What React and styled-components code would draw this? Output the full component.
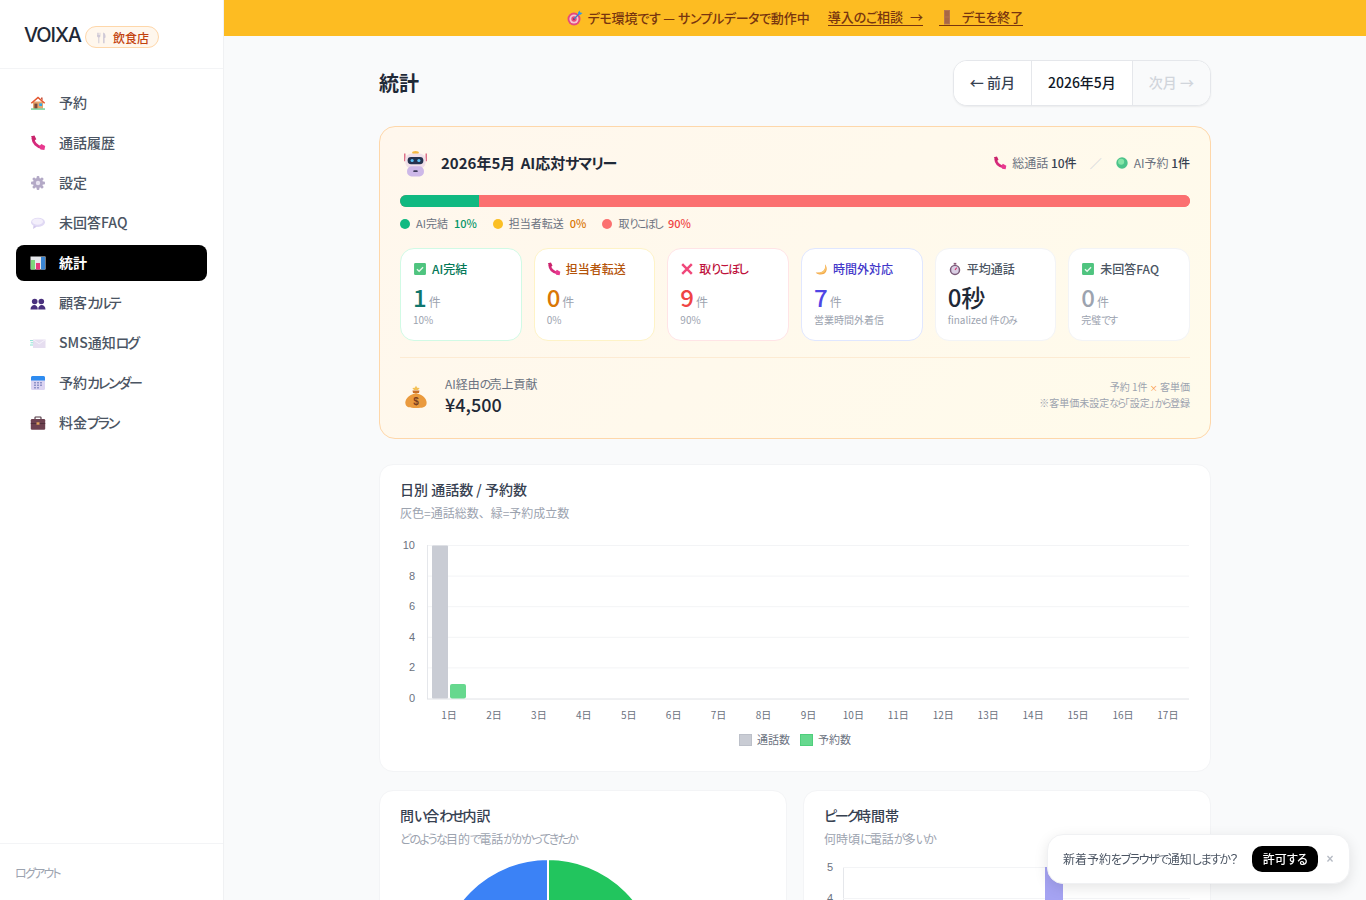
import React from "react";
import styled, { createGlobalStyle } from "styled-components";

const Global = createGlobalStyle`
  html, body { margin: 0; padding: 0; height: 100%; }
  body { font-family: "Noto Sans CJK JP", "Noto Sans", sans-serif; font-feature-settings: "palt"; color: #1f2937; background: #f9fafb; }
  * { box-sizing: border-box; }
`;

const Kana = styled.span`letter-spacing: var(--kana, -0.15em); font-feature-settings: "palt";`;
const T = ({ children }) => children.split(/([\u3040-\u30ff]+)/).map((part, i) => i % 2 ? <Kana key={i}>{part}</Kana> : part);

const Shell = styled.div`display: flex; height: 100vh; overflow: hidden;`;
const Sidebar = styled.aside`width: 224px; flex: none; background: #fff; border-right: 1px solid #f0f1f3; display: flex; flex-direction: column;`;
const Brand = styled.div`height: 69px; border-bottom: 1px solid #f3f4f6; display: flex; align-items: center; gap: 4px; padding: 0 24px;`;
const Logo = styled.span`font-family: Inter, sans-serif; font-size: 20px; font-weight: 500; letter-spacing: -1.1px; color: #1f2937; position: relative; top: 1px;`;
const IndustryBadge = styled.span`display: inline-flex; align-items: center; gap: 5px; height: 22px; width: 74px; padding: 0 9px; border-radius: 11px; border: 1px solid #fed7aa; background: #fff7ed; color: #c2410c; font-size: 12px; font-weight: 500; white-space: nowrap; margin-top: 6px;`;
const Nav = styled.nav`flex: 1; padding: 16px 16px 0; display: flex; flex-direction: column; gap: 4px;`;
const NavItem = styled.a`height: 36px; display: flex; align-items: center; gap: 13px; padding: 0 14px; border-radius: 8px; font-size: 14px; font-weight: ${p => p.$active ? 700 : 500}; color: ${p => p.$active ? "#fff" : "#4b5563"}; background: ${p => p.$active ? "#000" : "transparent"};`;
const NavLabel = styled.span`margin-top: -2px;`;
const SideFoot = styled.div`height: 57px; border-top: 1px solid #f3f4f6; display: flex; align-items: center; padding: 0 15px; font-size: 12px; color: #9ca3af;`;

const Main = styled.div`flex: 1; min-width: 0; display: flex; flex-direction: column;`;
const Banner = styled.div`--kana: -0.03em; height: 36px; flex: none; background: #fdbc22; color: #78350f; font-size: 13px; font-weight: 500; display: flex; align-items: center; justify-content: center; gap: 16px;`;
const BannerPart = styled.span`display: inline-flex; align-items: center; gap: 5px; margin-top: -1px; margin-right: 2px;`;
const BannerLink = styled.a`display: inline-flex; align-items: center; gap: 7px; border-bottom: 1px solid #78350f; line-height: 16px; margin-top: -1px; word-spacing: 4px;`;
const Content = styled.main`width: 832px; margin: 0 auto; padding-top: 24px;`;
const PageHead = styled.header`display: flex; align-items: center; justify-content: space-between; margin-bottom: 20px;`;
const Title = styled.h1`margin: 0 0 2px; font-size: 20px; font-weight: 700; color: #1f2937;`;
const MonthNav = styled.div`height: 46px; display: flex; border: 1px solid #e5e7eb; border-radius: 14px; background: #fff; overflow: hidden; box-shadow: 0 1px 2px rgba(0,0,0,.06);`;
const MonthBtn = styled.div`display: flex; align-items: center; padding: 0 16px 2px; font-size: 14px; font-weight: 500; color: ${p => p.$off ? "#d1d5db" : "#374151"}; background: ${p => p.$off ? "#f9fafb" : "#fff"}; ${p => p.$off && "border-left: 1px solid #e5e7eb;"}`;
const MonthLabel = styled.div`display: flex; align-items: center; padding: 0 16px 2px; font-size: 14px; font-weight: 500; color: #111827; border-left: 1px solid #e5e7eb;`;

const Summary = styled.section`height: 313px; background: linear-gradient(135deg, #fff7ed, #fffbeb); border: 1px solid #fed7aa; border-radius: 16px; padding: 20px; margin-bottom: 25px;`;
const SummaryHead = styled.div`height: 32px; display: flex; align-items: center; justify-content: space-between; margin-bottom: 16px;`;
const SummaryTitle = styled.h2`margin: 0; display: flex; align-items: center; gap: 12px; padding-left: 2px; font-size: 15px; font-weight: 700; color: #1f2937;`;
const TitleText = styled.span`--kana: -0.08em; margin-top: -2px; word-spacing: 2px;`;
const Totals = styled.div`display: flex; align-items: center; gap: 5px; font-size: 12px; color: #6b7280;`;
const TotalText = styled.span`margin-top: -2px;`;
const Strong = styled.b`font-weight: 500; color: #374151;`;
const Slash = styled.span`color: #d1d5db; margin: 0 8px;`;
const Progress = styled.div`height: 12px; border-radius: 6px; overflow: hidden; display: flex; background: #f87171;`;
const Segment = styled.div`background: ${p => p.$c};`;
const Legend = styled.div`display: flex; gap: 16px; margin-top: 8px; height: 16px; align-items: center; font-size: 11px; color: #6b7280;`;
const LegendItem = styled.span`display: inline-flex; align-items: center; margin-top: -1px;`;
const Dot = styled.i`width: 10px; height: 10px; border-radius: 50%; background: ${p => p.$c}; margin-right: 6px; position: relative; top: 1px;`;
const Pct = styled.b`font-size: 11px; font-weight: 500; color: ${p => p.$c}; margin-left: 6px;`;
const Tiles = styled.div`display: grid; grid-template-columns: repeat(6, 1fr); gap: 12px; margin-top: 17px;`;
const Tile = styled.div`height: 93px; background: #fff; border: 1px solid ${p => p.$b}; border-radius: 14px; padding: 11px 12px 0;`;
const TileLabel = styled.div`display: flex; align-items: center; gap: 5px; height: 18px; font-size: 12px; font-weight: 500; color: ${p => p.$c}; white-space: nowrap;`;
const LabelSpan = styled.span`margin-top: -2px;`;
const TileValue = styled.div`display: flex; align-items: baseline; gap: 2px; margin-top: 3px; height: 32px; line-height: 32px; font-size: 24px; font-weight: 500; color: ${p => p.$c};`;
const Unit = styled.span`font-size: 12px; font-weight: 400; color: #9ca3af;`;
const TileSub = styled.div`font-size: 10px; line-height: 14px; color: #9ca3af; margin-top: 0; white-space: nowrap;`;
const Revenue = styled.div`margin-top: 16px; border-top: 1px solid #fdebd3; display: flex; align-items: center; justify-content: space-between; height: 64px; padding: 14px 0 0 4px;`;
const RevLeft = styled.div`display: flex; align-items: center; gap: 17px;`;
const RevLabel = styled.div`font-size: 12px; color: #6b7280; line-height: 16px; margin-top: -1px;`;
const RevValue = styled.div`font-size: 18px; font-weight: 500; color: #1f2937; line-height: 24px;`;
const RevNote = styled.div`text-align: right; font-size: 10px; line-height: 14.500px; color: #9ca3af; margin-top: -3px;`;
const Times = styled.span`color: #fb923c; font-size: 8px;`;

const Card = styled.section`background: #fff; border: 1px solid #f3f4f6; border-radius: 14px; padding: 14px 20px 0; height: ${p => p.$h}px; overflow: hidden;`;
const CardTitle = styled.h3`margin: 0; font-size: 14px; font-weight: 500; color: #374151; line-height: 20px;`;
const CardSub = styled.p`margin: 4px 0 0; font-size: 12px; color: #9ca3af; line-height: 20px; font-feature-settings: normal;`;
const Twin = styled.div`display: grid; grid-template-columns: 1fr 1fr; gap: 16px; margin-top: 18px;`;
const ChartSvg = styled.svg`display: block; margin: ${p => p.$m}; overflow: visible;`;
const AxisText = styled.text`font-family: "Liberation Sans", Arial, sans-serif; font-size: 11px; fill: #6b7280;`;
const LabelText = styled.text`font-family: "Noto Sans CJK JP", sans-serif; font-size: ${p => p.$s || 10}px; fill: #6b7280;`;

const Toast = styled.div`--kana: -0.12em; position: fixed; right: 16px; bottom: 16px; width: 303px; height: 50px; background: #fff; border: 1px solid #f0f1f3; border-radius: 16px; box-shadow: 0 4px 14px rgba(0,0,0,.1); display: flex; align-items: center; padding: 0 15px; font-size: 12px; color: #4b5563; white-space: nowrap;`;
const ToastText = styled.span`flex: 1; margin-top: -1px;`;
const AllowBtn = styled.button`flex: none; height: 26px; width: 66px; padding: 0 0 2px; border: 0; border-radius: 10px; background: #000; color: #fff; font: 500 12px "Noto Sans CJK JP", sans-serif; font-feature-settings: "palt"; --kana: -0.05em;`;
const Close = styled.span`flex: none; width: 8px; margin-left: 8px; text-align: center; font: 700 12px "Liberation Sans", sans-serif; color: #b6bbc4;`;

const Svg = ({ s = 16, children }) => <svg width={s} height={s} viewBox="0 0 16 16" style={{ flex: "none" }}>{children}</svg>;

const icons = {
  house: <><rect x="3" y="6.5" width="10" height="7" fill="#e5a66e" /><path d="M.8 7.8 8 1.5l7.2 6.3-1 .9L8 3.6 1.8 8.7z" fill="#e4562f" /><path d="M11 2.5h1.6v3L11 4z" fill="#c9513a" /><rect x="4.4" y="8.6" width="3" height="4.9" fill="#7a4a3a" /><rect x="9.2" y="8.4" width="2.9" height="2.6" fill="#2fa8e6" /><rect x="1" y="13.5" width="14" height="1.1" fill="#46c07a" /></>,
  phone: <><path d="M2.900 3c.3 4.800 4 8.600 9.400 9.600" fill="none" stroke="#d62b7c" strokeWidth="3" /><path d="M1 1.300 4.500.6l1.800 3.700-2.900 2z" fill="#c9246b" /><path d="m9.300 11.500 2-2.600 3.900 2.200-.8 3.900-3.900-.4z" fill="#e8398f" /></>,
  gear: <><g fill="#b3a9c6"><circle cx="8" cy="8" r="5" /><rect x="6.600" y="1" width="2.800" height="14" rx="1" /><rect x="1" y="6.600" width="14" height="2.800" rx="1" /><rect x="6.600" y="1" width="2.800" height="14" rx="1" transform="rotate(45 8 8)" /><rect x="6.600" y="1" width="2.800" height="14" rx="1" transform="rotate(-45 8 8)" /></g><circle cx="8" cy="8" r="2.200" fill="#e9e4f1" /></>,
  bubble: <><ellipse cx="8" cy="7.300" rx="7" ry="4.600" fill="#e0d9f4" /><path d="M3.500 10.500 3 14l4-2.600z" fill="#d3c9ec" /><ellipse cx="7.600" cy="6.600" rx="5.400" ry="3.200" fill="#f3effb" /></>,
  chart: <><rect x=".5" y="1.500" width="15" height="13" fill="#e7e9ec" /><rect x="1" y="5" width="4" height="9.500" fill="#7ed67d" /><rect x="6" y="8" width="4" height="6.500" fill="#e8397f" /><rect x="11" y="2" width="4" height="12.500" fill="#3a86d4" /></>,
  people: <g fill="#49307d"><circle cx="4.700" cy="6.500" r="2.800" /><circle cx="11.300" cy="6.500" r="2.800" /><path d="M.5 14.500c0-6 7.600-6 7.300 0zM8.200 14.500c-.3-6 7.300-6 7.300 0z" /></g>,
  mail: <><rect x="3" y="4.500" width="12.500" height="8.500" fill="#e6def0" /><path d="m3 4.500 6.200 4.400 6.300-4.400" fill="none" stroke="#f5f1fa" strokeWidth="1" /><path d="M0 5.600h3M.6 7.800h2.600M0 10h3" stroke="#7fdccf" strokeWidth=".9" /></>,
  cal: <><rect x="1" y="1" width="14" height="14" rx="1.500" fill="#dcd4f2" /><path d="M1 5.500V2.500A1.500 1.500 0 0 1 2.500 1h11A1.500 1.500 0 0 1 15 2.500v3z" fill="#2e8cf0" /><g fill="#8f92c8"><rect x="4" y="7" width="2" height="1.500" /><rect x="7" y="7" width="2" height="1.500" /><rect x="10" y="7" width="2" height="1.500" /><rect x="4" y="9.500" width="2" height="1.500" /><rect x="7" y="9.500" width="2" height="1.500" /><rect x="10" y="9.500" width="2" height="1.500" /><rect x="4" y="12" width="2" height="1.500" /><rect x="7" y="12" width="2" height="1.500" /></g></>,
  case: <><rect x="5" y="2" width="6" height="3" rx=".6" fill="none" stroke="#4e3440" strokeWidth="1.100" /><rect x=".8" y="4" width="14.400" height="10.800" rx="1.200" fill="#6d4150" /><rect x=".8" y="8" width="14.400" height="1" fill="#51303c" /><rect x="6.500" y="7.300" width="3" height="2.400" fill="#e0a05a" /></>,
  cutlery: <g fill="#cfc9d6"><path d="M2.500 2h.9v3h.7V2h.9v3h.7V2h.9v4.200c0 1-.7 1.600-1.300 1.800V15H4.100V8c-.9-.2-1.600-.8-1.600-1.800z" /><path d="M10 1.800c2 .3 3 2.300 3 5.300 0 1-.5 1.500-1.200 1.500V15H10z" /></g>,
  target: <><circle cx="7" cy="9" r="6.500" fill="#e64a7b" /><circle cx="7" cy="9" r="4.600" fill="#f4c4d3" /><circle cx="7" cy="9" r="2.700" fill="#e64a7b" /><circle cx="7" cy="9" r="1" fill="#a32155" /><path d="M7 9 13 3" stroke="#3b82c4" strokeWidth="1.200" /><path d="m11 2.500 1.600-2 .7 2 2.200.6-2 1.700-2.200-.2z" fill="#2f9be8" /></>,
  door: <><rect x="5" y="1" width="6" height="14.500" fill="#b5754f" /><rect x="6" y="2" width="4" height="5.500" fill="#a86745" /><rect x="6" y="8.500" width="4" height="6" fill="#a86745" /></>,
  robot: <><path d="M2.500 3v7M21.500 3v7" stroke="#d3456b" strokeWidth="1" /><ellipse cx="12" cy="2.500" rx="3" ry="1.600" fill="#f5b942" /><rect x="3" y="3" width="18" height="13.500" rx="5.500" fill="#f0dfe8" /><rect x="5" y="6.200" width="14" height="6.400" rx="3" fill="#24324f" /><circle cx="9" cy="9.300" r="1.400" fill="#5cc0f5" /><circle cx="15" cy="9.300" r="1.400" fill="#5cc0f5" /><rect x="4.500" y="14.500" width="15" height="9" rx="4" fill="#cdb8e8" /><rect x="10" y="18" width="4" height="1.600" rx=".8" fill="#3f3b5c" /></>,
  bag: <><path d="M12 8C4 10 .5 15 1.500 19c.8 3.400 4 4 10.500 4s9.700-.6 10.500-4c1-4-2.500-9-10.500-11z" fill="#ea9a3e" /><path d="M9 8h6l.5-2.500h-7z" fill="#c9702a" /><path d="m12 .8 1.200 2 2.500.3-1.700 1.800H10l-1.700-1.800 2.500-.3z" fill="#f3c056" /><text x="12" y="20" textAnchor="middle" fontFamily="Liberation Sans" fontSize="10" fontWeight="700" fill="#7b3f22">$</text></>,
  check: <><rect x="1.200" y="1.200" width="13.600" height="13.600" rx="1.500" fill="#4fc47f" /><path d="m4.500 8.200 2.500 2.400 4.500-4.600" fill="none" stroke="#e6f8ec" strokeWidth="1.500" /></>,
  cross: <path d="M2.500 2.500 13.500 13.500M13.500 2.500 2.500 13.500" stroke="#f0477a" strokeWidth="2.800" />,
  moon: <><path d="M12.500 2.500c1.500 6-2.500 10.500-10.500 9.500 2.500 3 9 3.500 11.500-.5 2-3.200.8-7.200-1-9z" fill="#f4a94a" /><path d="M13 3c1 5-3 9-9 9.500 3 1.500 7.500.5 9-2.500 1.200-2.500 1-5 0-7z" fill="#f8c66d" /></>,
  watch: <><rect x="6.500" y="1" width="3" height="2" fill="#8a5a7a" /><circle cx="8" cy="9" r="6" fill="#7a5a78" /><circle cx="8" cy="9" r="4.300" fill="#d9cfe4" /><path d="M8 9 10 6.500" stroke="#d6336c" strokeWidth="1.200" /></>,
  green: <><circle cx="8" cy="8" r="6.500" fill="#4cc38a" /><circle cx="7" cy="6.500" r="3.500" fill="#86e5a8" /></>
};
const Icon = ({ n, s }) => n === "robot" || n === "bag" ? <svg width={s || 24} height={s || 24} viewBox="0 0 24 24" style={{ flex: "none" }}>{icons[n]}</svg> : <Svg s={s}>{icons[n]}</Svg>;

const navItems = [["house", "予約"], ["phone", "通話履歴"], ["gear", "設定"], ["bubble", "未回答FAQ"], ["chart", "統計", true], ["people", "顧客カルテ"], ["mail", "SMS通知ログ"], ["cal", "予約カレンダー"], ["case", "料金プラン"]];
const tiles = [
  { i: "check", l: "AI完結", lc: "#047857", v: "1", vc: "#0f766e", u: "件", s: "10%", b: "#d1fae5" },
  { i: "phone", l: "担当者転送", lc: "#b45309", v: "0", vc: "#d97706", u: "件", s: "0%", b: "#fef3c7" },
  { i: "cross", l: "取りこぼし", lc: "#be123c", v: "9", vc: "#ef4444", u: "件", s: "90%", b: "#ffe4e6" },
  { i: "moon", l: "時間外対応", lc: "#4338ca", v: "7", vc: "#4f46e5", u: "件", s: "営業時間外着信", b: "#e0e7ff" },
  { i: "watch", l: "平均通話", lc: "#4b5563", v: "0秒", vc: "#1f2937", s: "finalized 件のみ", b: "#f3f4f6" },
  { i: "check", l: "未回答FAQ", lc: "#4b5563", v: "0", vc: "#9ca3af", u: "件", s: "完璧です", b: "#f3f4f6" }
];

const days = Array.from({ length: 17 }, (_, i) => i + 1);
const DailyChart = () => (
  <ChartSvg width="790" height="222" viewBox="0 0 790 222" $m="22px 0 0">
    {[0, 30.6, 61.2, 91.8, 122.4].map(y => <line key={y} x1="27" x2="789" y1={y + 0.5} y2={y + 0.5} stroke="#f3f4f6" />)}
    <line x1="27.500" x2="27.500" y1="0" y2="154" stroke="#e5e7eb" />
    <line x1="27" x2="789" y1="154" y2="154" stroke="#e0e2e6" />
    {[["10", 0], ["8", 30.6], ["6", 61.2], ["4", 91.8], ["2", 122.4], ["0", 152.5]].map(([t, y]) => <AxisText key={t} x="15" y={y + 4} textAnchor="end">{t}</AxisText>)}
    <rect x="32" y="0.500" width="16" height="153" rx="1" fill="#c9ccd4" />
    <rect x="50" y="139" width="16" height="14.500" rx="2" fill="#66d88e" />
    {days.map(d => <LabelText key={d} x={49 + (d - 1) * 44.930} y="173.500" textAnchor="middle">{d}日</LabelText>)}
    <rect x="339.500" y="189.500" width="12" height="11" fill="#c9ccd4" stroke="#bcc0c9" />
    <LabelText $s={11} x="357" y="198.500">通話数</LabelText>
    <rect x="400.500" y="189.500" width="12" height="11" fill="#66d88e" stroke="#4fcf7c" />
    <LabelText $s={11} x="418" y="198.500">予約数</LabelText>
  </ChartSvg>
);

export default function App() {
  return (
    <Shell>
      <Global />
      <Sidebar>
        <Brand>
          <Logo>VOIXA</Logo>
          <IndustryBadge><Icon n="cutlery" s={13} />飲食店</IndustryBadge>
        </Brand>
        <Nav>
          {navItems.map(([i, t, a]) => <NavItem key={t} $active={a}><Icon n={i} /><NavLabel><T>{t}</T></NavLabel></NavItem>)}
        </Nav>
        <SideFoot><T>ログアウト</T></SideFoot>
      </Sidebar>
      <Main>
        <Banner>
          <BannerPart><Icon n="target" /><span><T>デモ環境です — サンプルデータで動作中</T></span></BannerPart>
          <BannerLink><span><T>導入のご相談 →</T></span></BannerLink>
          <BannerLink><Icon n="door" /><span><T>デモを終了</T></span></BannerLink>
        </Banner>
        <Content>
          <PageHead>
            <Title>統計</Title>
            <MonthNav>
              <MonthBtn>← 前月</MonthBtn>
              <MonthLabel>2026年5月</MonthLabel>
              <MonthBtn $off>次月 →</MonthBtn>
            </MonthNav>
          </PageHead>
          <Summary>
            <SummaryHead>
              <SummaryTitle><Icon n="robot" s={27} /><TitleText><T>2026年5月 AI応対サマリー</T></TitleText></SummaryTitle>
              <Totals>
                <Icon n="phone" s={14} /><TotalText>総通話 <Strong>10件</Strong></TotalText><Slash>／</Slash><Icon n="green" s={14} /><TotalText>AI予約 <Strong>1件</Strong></TotalText>
              </Totals>
            </SummaryHead>
            <Progress>
              <Segment $c="#10b981" style={{ width: "10%" }} />
              <Segment $c="#fb7070" style={{ width: "90%" }} />
            </Progress>
            <Legend>
              <LegendItem><Dot $c="#10b981" />AI完結<Pct $c="#059669">10%</Pct></LegendItem>
              <LegendItem><Dot $c="#fbbf24" />担当者転送<Pct $c="#d97706">0%</Pct></LegendItem>
              <LegendItem><Dot $c="#fb7070" /><span><T>取りこぼし</T></span><Pct $c="#ef4444">90%</Pct></LegendItem>
            </Legend>
            <Tiles>
              {tiles.map(t => (
                <Tile key={t.l} $b={t.b}>
                  <TileLabel $c={t.lc}><Icon n={t.i} s={14} /><LabelSpan><T>{t.l}</T></LabelSpan></TileLabel>
                  <TileValue $c={t.vc}>{t.v}{t.u && <Unit>{t.u}</Unit>}</TileValue>
                  <TileSub><T>{t.s}</T></TileSub>
                </Tile>
              ))}
            </Tiles>
            <Revenue>
              <RevLeft>
                <Icon n="bag" s={24} />
                <div>
                  <RevLabel><T>AI経由の売上貢献</T></RevLabel>
                  <RevValue>¥4,500</RevValue>
                </div>
              </RevLeft>
              <RevNote>予約 1件 <Times>×</Times> 客単価<br /><T>※客単価未設定なら「設定」から登録</T></RevNote>
            </Revenue>
          </Summary>
          <Card $h={308}>
            <CardTitle>日別 通話数 / 予約数</CardTitle>
            <CardSub>灰色=通話総数、緑=予約成立数</CardSub>
            <DailyChart />
          </Card>
          <Twin>
            <Card $h={300}>
              <CardTitle><T>問い合わせ内訳</T></CardTitle>
              <CardSub><T>どのような目的で電話がかかってきたか</T></CardSub>
              <ChartSvg width="366" height="220" viewBox="0 0 366 220" $m="10px 0 0">
                <path d="M148 110V0A110 110 0 0 1 258 110z" fill="#22c55e" stroke="#fff" strokeWidth="2" />
                <path d="M148 110V0A110 110 0 0 0 38 110z" fill="#3b82f6" stroke="#fff" strokeWidth="2" />
              </ChartSvg>
            </Card>
            <Card $h={300}>
              <CardTitle><T>ピーク時間帯</T></CardTitle>
              <CardSub><T>何時頃に電話が多いか</T></CardSub>
              <ChartSvg width="366" height="220" viewBox="0 0 366 220" $m="18px 0 0">
                <line x1="19.500" x2="19.500" y1="0" y2="200" stroke="#e5e7eb" />
                <line x1="19" x2="366" y1="0.500" y2="0.500" stroke="#f3f4f6" />
                <line x1="19" x2="366" y1="31.500" y2="31.500" stroke="#f3f4f6" />
                <AxisText x="9" y="3.500" textAnchor="end">5</AxisText>
                <AxisText x="9" y="34.500" textAnchor="end">4</AxisText>
                <rect x="221" y="0" width="18" height="200" fill="#a5a3f2" />
              </ChartSvg>
            </Card>
          </Twin>
        </Content>
      </Main>
      <Toast>
        <ToastText><T>新着予約をブラウザで通知しますか？</T></ToastText>
        <AllowBtn><T>許可する</T></AllowBtn>
        <Close>×</Close>
      </Toast>
    </Shell>
  );
}
